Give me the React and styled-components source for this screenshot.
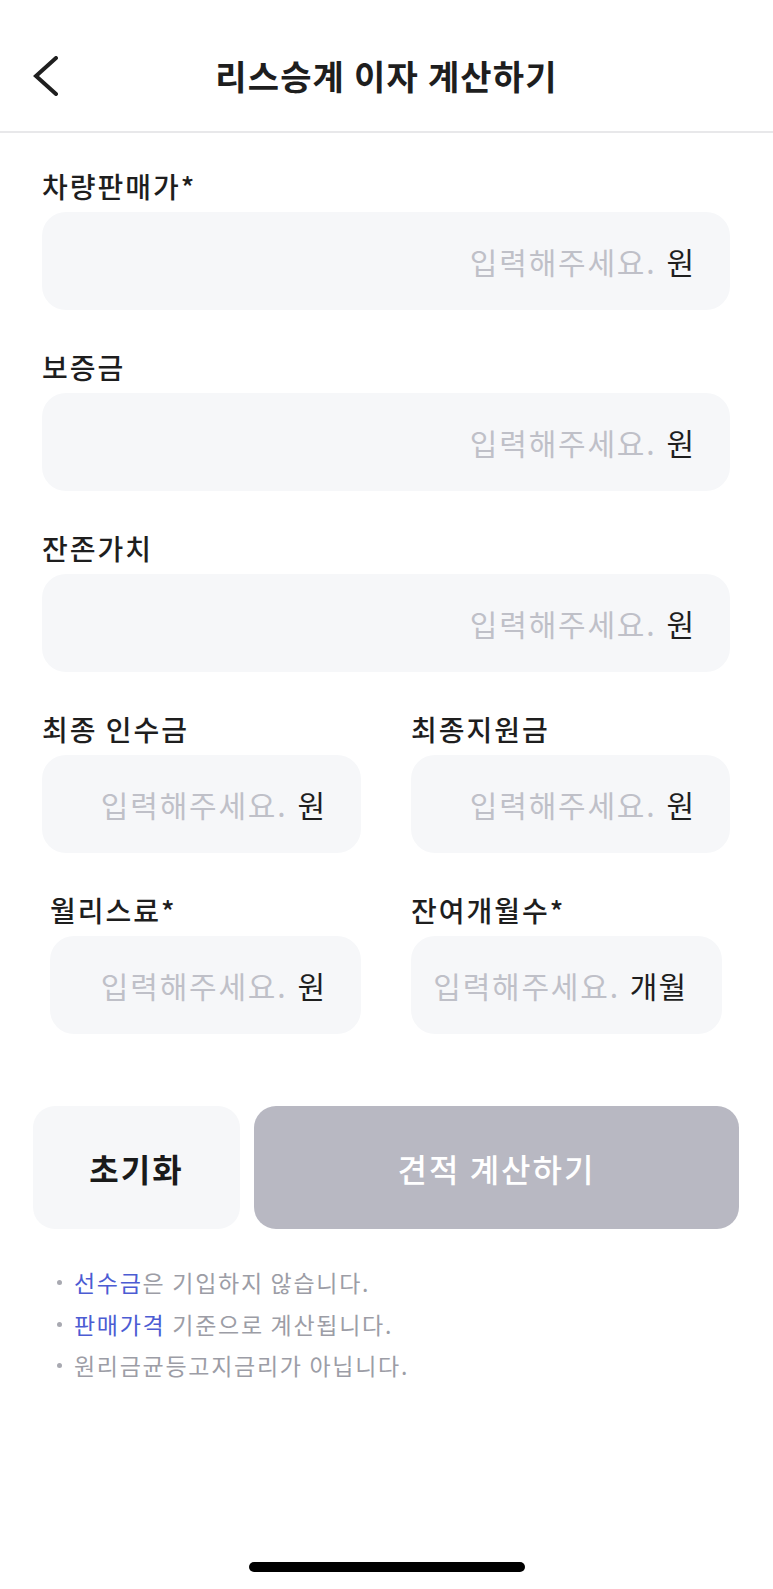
import React from "react";
import styled, { createGlobalStyle } from "styled-components";

const Global = createGlobalStyle`
  html, body { margin: 0; padding: 0; background: #ffffff; }
  body { font-family: "Noto Sans CJK KR", "Noto Sans", sans-serif; }
  * { box-sizing: border-box; }
`;

const Page = styled.div`
  width: 773px;
  min-height: 1589px;
  display: flex;
  flex-direction: column;
  background: #fff;
`;

const Header = styled.header`
  display: grid;
  grid-template-columns: 1fr auto 1fr;
  align-items: center;
  height: 133px;
  padding: 20px 33px 0;
  border-bottom: 2px solid #e8e8ea;
`;

const BackButton = styled.button`
  justify-self: start;
  width: 30px;
  height: 44px;
  padding: 0;
  border: 0;
  background: none;
  display: flex;
  align-items: center;
  justify-content: flex-start;
  color: #1f1f1f;
`;

const Title = styled.h1`
  margin: 0;
  font-size: 34px;
  font-weight: 600;
  color: #1e1e1e;
  letter-spacing: 1.2px;
`;

const Form = styled.div`
  display: flex;
  flex-direction: column;
  gap: 39px;
  padding: 35px 43px 0 42px;
`;

const Row = styled.div`
  display: grid;
  grid-template-columns: repeat(2, minmax(0, 1fr));
  column-gap: 50px;
`;

const Field = styled.div`
  display: flex;
  flex-direction: column;
  gap: 8px;
  min-width: 0;
  padding-left: ${(p) => (p.$insetLeft ? "8px" : "0")};
  padding-right: ${(p) => (p.$insetRight ? "8px" : "0")};
`;

const Label = styled.label`
  font-size: 28px;
  line-height: 36px;
  font-weight: 500;
  color: #1e1e1e;
  letter-spacing: 2px;
  white-space: nowrap;
`;

const Box = styled.div`
  height: 98px;
  border-radius: 24px;
  background: #f6f7f9;
  display: flex;
  align-items: center;
  gap: 10px;
  padding: 0 35px 0 12px;
`;

const Input = styled.input`
  flex: 1;
  min-width: 0;
  width: 0;
  border: 0;
  outline: none;
  background: transparent;
  text-align: right;
  font-family: inherit;
  font-size: 30px;
  color: #1e1e1e;
  letter-spacing: 1.8px;
  padding: 0;
  &::placeholder {
    color: #bfc0c8;
  }
`;

const Unit = styled.span`
  font-size: 30px;
  color: #1e1e1e;
  letter-spacing: 1px;
  white-space: nowrap;
`;

const Buttons = styled.div`
  display: flex;
  gap: 14px;
  padding: 72px 34px 0 33px;
`;

const Button = styled.button`
  height: 123px;
  border: 0;
  border-radius: 22px;
  font-family: inherit;
  font-size: 32px;
  letter-spacing: 2px;
  width: ${(p) => (p.$primary ? "auto" : "207px")};
  flex: ${(p) => (p.$primary ? "1" : "none")};
  background: ${(p) => (p.$primary ? "#b8b8c2" : "#f6f7f9")};
  color: ${(p) => (p.$primary ? "#ffffff" : "#1a1a1a")};
  font-weight: ${(p) => (p.$primary ? 500 : 700)};
`;

const Notes = styled.ul`
  list-style: none;
  margin: 0;
  padding: 33px 0 0 57px;
`;

const Note = styled.li`
  display: flex;
  align-items: center;
  font-size: 23px;
  line-height: 41.5px;
  color: #9c9da6;
  letter-spacing: 1.7px;
  &::before {
    content: "";
    width: 5px;
    height: 5px;
    border-radius: 50%;
    background: #a8a9b1;
    margin-right: 12px;
    flex: none;
  }
`;

const Accent = styled.span`
  color: #4c5cd3;
`;

const HomeBar = styled.div`
  margin: auto auto 17px;
  width: 276px;
  height: 10px;
  border-radius: 5px;
  background: #000;
`;

function InputField({ label, unit = "원", insetLeft, insetRight }) {
  return (
    <Field $insetLeft={insetLeft} $insetRight={insetRight}>
      <Label>{label}</Label>
      <Box>
        <Input placeholder="입력해주세요." />
        <Unit>{unit}</Unit>
      </Box>
    </Field>
  );
}

export default function App() {
  return (
    <Page>
      <Global />
      <Header>
        <BackButton aria-label="뒤로">
          <svg width="26" height="40" viewBox="0 0 26 40" fill="none">
            <path
              d="M23 2 L3 20 L23 38"
              stroke="currentColor"
              strokeWidth="4"
              strokeLinecap="round"
              strokeLinejoin="miter"
            />
          </svg>
        </BackButton>
        <Title>리스승계 이자 계산하기</Title>
        <span />
      </Header>
      <Form>
        <InputField label="차량판매가*" />
        <InputField label="보증금" />
        <InputField label="잔존가치" />
        <Row>
          <InputField label="최종 인수금" />
          <InputField label="최종지원금" />
        </Row>
        <Row>
          <InputField label="월리스료*" insetLeft />
          <InputField label="잔여개월수*" unit="개월" insetRight />
        </Row>
      </Form>
      <Buttons>
        <Button>초기화</Button>
        <Button $primary>견적 계산하기</Button>
      </Buttons>
      <Notes>
        <Note>
          <span>
            <Accent>선수금</Accent>은 기입하지 않습니다.
          </span>
        </Note>
        <Note>
          <span>
            <Accent>판매가격</Accent> 기준으로 계산됩니다.
          </span>
        </Note>
        <Note>
          <span>원리금균등고지금리가 아닙니다.</span>
        </Note>
      </Notes>
      <HomeBar />
    </Page>
  );
}
